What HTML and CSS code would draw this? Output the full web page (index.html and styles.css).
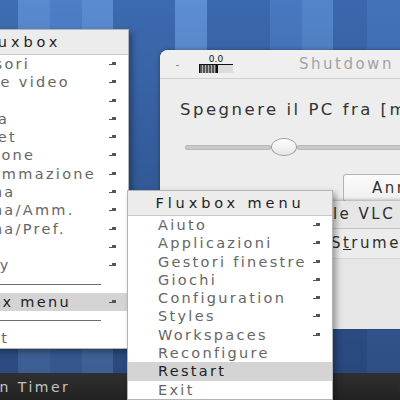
FILE: index.html
```html
<!DOCTYPE html>
<html lang="it">
<head>
  <meta charset="UTF-8">
  <meta name="viewport" content="width=device-width, initial-scale=1.0">
  <title>Fluxbox desktop</title>
  <link rel="stylesheet" href="styles.css">
</head>
<body>
  <div class="desktop">

    <!-- Shutdown Timer dialog -->
    <div class="window dialog">
      <div class="titlebar">
        <span class="btn-min"></span>
        <div class="meter">
          <span class="meter-val">0.0</span>
          <span class="meter-bar"><span class="meter-fill"></span></span>
        </div>
        <span class="title">Shutdown Timer</span>
      </div>
      <div class="dialog-body">
        <p class="prompt">Spegnere il PC fra [minuti]:</p>
        <div class="slider">
          <span class="track track-left"></span>
          <span class="thumb"></span>
          <span class="track"></span>
        </div>
        <div class="actions">
          <button class="btn">Annulla</button>
          <button class="btn">OK</button>
        </div>
      </div>
    </div>

    <!-- VLC main window -->
    <div class="window vlc">
      <div class="vlc-title">Lettore multimediale VLC</div>
      <div class="vlc-menubar">
        <span>Media</span>
        <span>Riproduzione</span>
        <span>Audio</span>
        <span>Video</span>
        <span>Sottotitoli</span>
        <span>S<u>t</u>rumenti</span>
        <span>Visualizza</span>
        <span>Aiuto</span>
      </div>
      <div class="vlc-body"></div>
    </div>

    <!-- Toolbar -->
    <div class="taskbar">
      <span class="task">Shutdown Timer</span>
      <span class="task">Lettore multimediale VLC</span>
    </div>

    <!-- Root menu -->
    <div class="menu root-menu">
      <div class="menu-title">Fluxbox</div>
      <ul class="menu-items">
        <li class="sub">Accessori</li>
        <li class="sub">Audio e video</li>
        <li class="sub">Giochi</li>
        <li class="sub">Grafica</li>
        <li class="sub">Internet</li>
        <li class="sub">Istruzione</li>
        <li class="sub">Programmazione</li>
        <li class="sub">Sistema</li>
        <li class="sub">Sistema/Amm.</li>
        <li class="sub">Sistema/Pref.</li>
        <li class="sub">Utilità</li>
        <li class="sub">Display</li>
        <li class="sep"></li>
        <li class="sub active">Fluxbox menu</li>
        <li class="sep"></li>
        <li>Restart</li>
      </ul>
    </div>

    <!-- Fluxbox submenu -->
    <div class="menu sub-menu">
      <div class="menu-title">Fluxbox menu</div>
      <ul class="menu-items">
        <li class="sub">Aiuto</li>
        <li class="sub">Applicazioni</li>
        <li class="sub">Gestori finestre</li>
        <li class="sub">Giochi</li>
        <li class="sub">Configuration</li>
        <li class="sub">Styles</li>
        <li class="sub">Workspaces</li>
        <li>Reconfigure</li>
        <li class="active">Restart</li>
        <li>Exit</li>
      </ul>
    </div>
  </div>
</body>
</html>
```

FILE: styles.css
```css
/* Page and desktop background */
body {
  margin: 0;
  overflow: hidden;
  font-family: 'DejaVu Sans', Verdana, sans-serif;
}

.desktop {
  position: relative;
  width: 400px;
  height: 400px;
  overflow: hidden;
  background:
    linear-gradient(to bottom, rgba(0, 0, 20, 0) 0, rgba(0, 0, 20, 0.32) 373px),
    linear-gradient(to right,
      #3e6db3 0 18px, #5989cf 18px 50px, #4d7ec6 50px 82px, #5a8bd1 82px 113px,
      #3c6ab0 113px 175px, #5d8dd2 175px 207px, #3b69ae 207px 270px,
      #4878c0 270px 302px, #5384ca 302px 333px, #3b68ad 333px 367px, #4473ba 367px);
}

/* Windows sit on the desktop at their own places */
.window {
  position: absolute;
  box-sizing: border-box;
}

/* Shutdown dialog */
.dialog {
  left: 160px;
  top: 50px;
  width: 436px;
  height: 160px;
  background: #ededed;
  border-radius: 8px 8px 0 0;
  box-shadow: 0 0 4px rgba(0, 0, 0, 0.35);
  overflow: hidden;
}

.titlebar {
  display: flex;
  align-items: center;
  height: 28px;
  padding-left: 16px;
  background: #efefef;
  border-bottom: 1px solid #cfcfcf;
}

.btn-min {
  width: 3px;
  height: 1px;
  margin-top: 2px;
  background: #8a8a8a;
}

.meter {
  display: flex;
  flex-direction: column;
  align-items: center;
  margin-left: 20px;
}

.meter-val {
  font-size: 9px;
  line-height: 8px;
  color: #111;
}

.meter-bar {
  display: flex;
  width: 33px;
  height: 8px;
  margin-top: 1px;
  background: #dcdcdc;
  border-top: 1px solid #111;
  border-left: 1px solid #111;
}

.meter-fill {
  width: 16px;
  background: repeating-linear-gradient(to right, #555 0 2px, #b0b0b0 2px 3px);
  border-right: 2px solid #111;
}

.title {
  margin-left: 66px;
  font-size: 15px;
  letter-spacing: 2.5px;
  color: #a3a3a3;
  white-space: nowrap;
}

.dialog-body {
  padding: 21px 25px 0 20px;
}

.prompt {
  margin: 0;
  font-size: 16.5px;
  line-height: 20px;
  letter-spacing: 2.5px;
  color: #333;
  white-space: nowrap;
}

.slider {
  display: flex;
  align-items: center;
  height: 18px;
  margin-top: 18px;
  margin-left: 5px;
}

.track {
  flex: 1;
  height: 3px;
  background: #c9c9c9;
  border: 1px solid #b9b9b9;
  border-radius: 2px;
}

.track-left {
  flex: 0 0 84px;
}

.thumb {
  width: 24px;
  height: 16px;
  border: 1px solid #9c9c9c;
  border-radius: 50%;
  background: linear-gradient(#ffffff, #e6e6e6);
}

.actions {
  display: flex;
  gap: 8px;
  margin-top: 18px;
  padding-left: 163px;
}

.btn {
  flex: 0 0 132px;
  height: 28px;
  padding: 0;
  font-family: inherit;
  font-size: 15px;
  letter-spacing: 2.5px;
  color: #333;
  background: linear-gradient(#fbfbfb, #eeeeee);
  border: 1px solid #b3b3b3;
  border-radius: 3px;
}

/* VLC window, mostly hidden behind the menus */
.vlc {
  left: -130px;
  top: 201px;
  width: 800px;
  background: #ececec;
  box-shadow: 0 -1px 3px rgba(0, 0, 0, 0.3);
  font-size: 15px;
  letter-spacing: 2.5px;
  color: #2e2e2e;
}

.vlc-title {
  height: 27px;
  line-height: 27px;
  text-align: center;
  background: #e6e6e6;
  border-bottom: 1px solid #c4c4c4;
}

.vlc-menubar {
  display: flex;
  gap: 12px;
  height: 29px;
  line-height: 28px;
  padding-left: 5px;
  white-space: nowrap;
  border-bottom: 1px solid #d6d6d6;
}

.vlc-body {
  height: 70px;
  background: #e6e6e6;
}

/* Toolbar at the bottom */
.taskbar {
  position: absolute;
  left: -90px;
  bottom: 0;
  display: flex;
  height: 27px;
  background: linear-gradient(#2f2f2f, #222);
}

.task {
  box-sizing: border-box;
  width: 478px;
  padding-left: 11px;
  line-height: 28px;
  font-size: 14px;
  letter-spacing: 2.5px;
  color: #c4c4c4;
  white-space: nowrap;
}

/* Fluxbox menus */
.menu {
  position: absolute;
  background: #fff;
  border: 1px solid #b4b4b4;
  box-shadow: 3px 3px 6px rgba(0, 0, 0, 0.35);
}

.root-menu {
  left: -90px;
  top: 29px;
  width: 217px;
}

.sub-menu {
  left: 127px;
  top: 190px;
  width: 204px;
}

.menu-title {
  height: 24px;
  line-height: 25px;
  text-align: center;
  font-size: 14.5px;
  letter-spacing: 3.9px;
  color: #1e1e1e;
  background: #ececec;
  border-bottom: 1px solid #c9c9c9;
  white-space: nowrap;
}

.menu-items {
  list-style: none;
  margin: 0;
  padding: 0;
}

.menu-items li {
  position: relative;
  height: 18.3px;
  line-height: 18.3px;
  padding-left: 30px;
  font-size: 14.5px;
  letter-spacing: 2.3px;
  color: #666;
  white-space: nowrap;
}

.menu-items li.active {
  background: #d4d4d4;
  color: #222;
}

/* Submenu arrow */
.menu-items li.sub::after {
  content: "";
  position: absolute;
  right: 12px;
  top: 7px;
  width: 7px;
  height: 5px;
  background:
    linear-gradient(#555, #555) 0 2px / 4px 1px no-repeat,
    conic-gradient(from -90deg at 100% 50%, #555 0 180deg, transparent 0) 3px 0 / 4px 5px no-repeat;
}

.menu-items li.sep::before {
  content: "";
  position: absolute;
  left: 8px;
  right: 27px;
  top: 9px;
  border-top: 1px solid #6a6a6a;
}
```
